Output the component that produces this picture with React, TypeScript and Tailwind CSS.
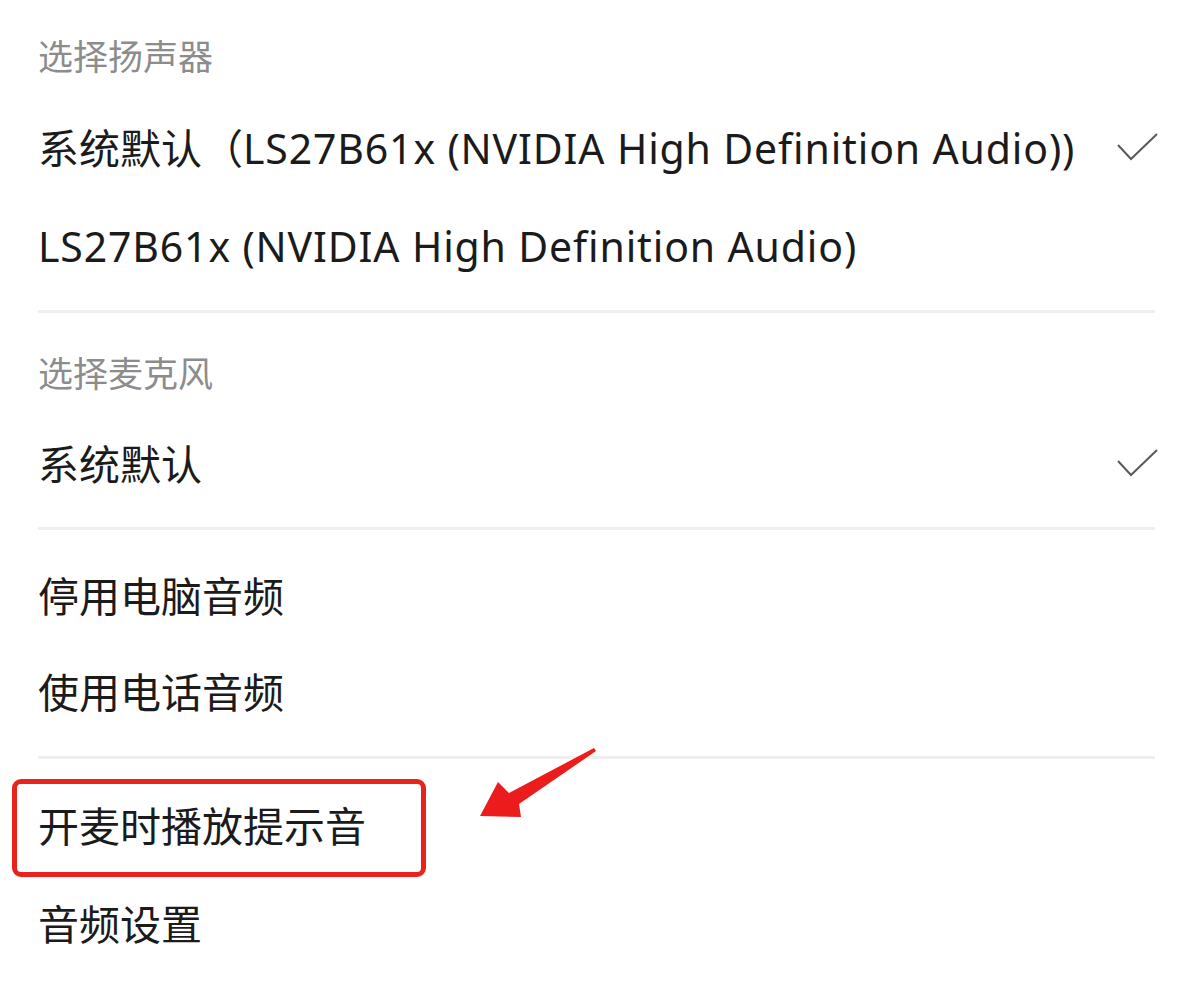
import React from "react";

const font = { fontFamily: '"Noto Sans", "Noto Sans CJK SC", sans-serif' };

function Check() {
  return (
    <svg width="44" height="30" viewBox="0 0 44 30" className="shrink-0">
      <polyline points="2,12 15,26 41,1" fill="none" stroke="#5a5a5a" strokeWidth="2" strokeLinejoin="miter" />
    </svg>
  );
}

function Item({ children, check = false, extra = "" }: { children: React.ReactNode; check?: boolean; extra?: string }) {
  return (
    <div className={`h-[98px] flex items-center justify-between pr-[40px] ${extra}`}>
      <span className="text-[41px] leading-[40px] text-[#1b1b1b] whitespace-nowrap">{children}</span>
      {check && <Check />}
    </div>
  );
}

function Latin({ children }: { children: React.ReactNode }) {
  return <span className="tracking-[0.85px]">{children}</span>;
}

function Heading({ text, pt }: { text: string; pt: string }) {
  return (
    <div className={`${pt} text-[35px] leading-[40px] text-[#8c8c8c]`}>{text}</div>
  );
}

function Divider({ mt, mb }: { mt: string; mb: string }) {
  return <div className={`${mt} ${mb} h-[3px] w-[1117px] bg-[#efefef]`} />;
}

export default function App() {
  return (
    <div className="relative w-[1200px] h-[988px] bg-white overflow-hidden" style={font}>
      <div className="flex flex-col pl-[38px]">
        <Heading text="选择扬声器" pt="pt-[37px]" />
        <div className="h-[22px]" />
        <Item check>
          系统默认（<Latin>LS27B61x (NVIDIA High Definition Audio))</Latin>
        </Item>
        <Item>
          <Latin>LS27B61x (NVIDIA High Definition Audio)</Latin>
        </Item>
        <Divider mt="mt-[15px]" mb="mb-0" />
        <Heading text="选择麦克风" pt="pt-[41px]" />
        <Item check extra="mt-[21px]">
          系统默认
        </Item>
        <Divider mt="mt-[14px]" mb="mb-[17px]" />
        <Item>停用电脑音频</Item>
        <Item extra="-mt-[2px]">使用电话音频</Item>
        <Divider mt="mt-[15px]" mb="mb-[18px]" />
        <Item>开麦时播放提示音</Item>
        <Item>音频设置</Item>
      </div>
      <div className="absolute left-[12px] top-[779px] w-[414px] h-[98px] border-[5px] border-[#e8231c] rounded-[9px]" />
      <svg className="absolute left-0 top-0" width="1200" height="988" viewBox="0 0 1200 988">
        <polygon
          points="480,816 498,782 509,793 594,748 596,751 519,804 521,817"
          fill="#ec1c1c"
        />
      </svg>
    </div>
  );
}
